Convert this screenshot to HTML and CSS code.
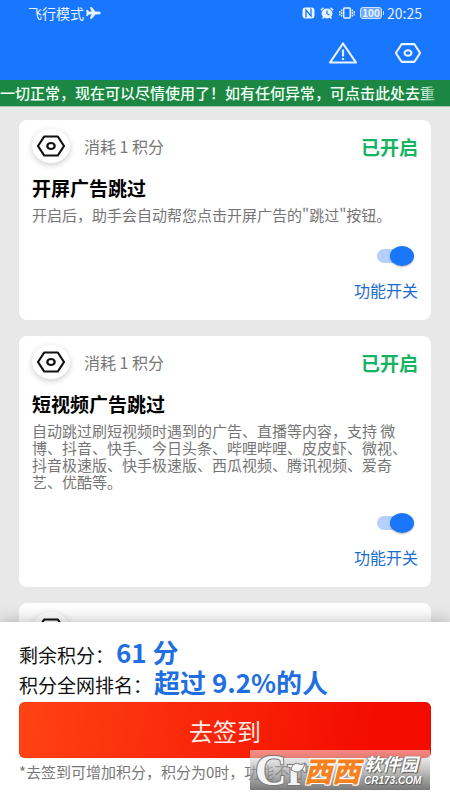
FILE: index.html
```html
<!DOCTYPE html>
<html lang="zh-CN">
<head>
<meta charset="utf-8">
<meta name="viewport" content="width=device-width, initial-scale=1">
<title>广告跳过助手</title>
<link rel="stylesheet" href="styles.css">
</head>
<body>
<svg width="0" height="0" class="defs" aria-hidden="true">
  <symbol id="hex" viewBox="0 0 30 22">
    <path d="M8.200 1.500h13.600L28 11l-6.200 9.500H8.200L2 11z" fill="none" stroke="currentColor" stroke-width="2.200" stroke-linejoin="round"/>
    <ellipse cx="15" cy="11" rx="3.700" ry="3" fill="none" stroke="currentColor" stroke-width="2.200"/>
  </symbol>
</svg>

<header class="header">
  <div class="status">
    <span>飞行模式</span>
    <svg class="plane" width="15" height="12" viewBox="0 0 15 12"><path d="M14.500 6c0-.7-.8-1.100-1.800-1.100H9.400L5.800.4H4.300l1.600 4.500H3L1.700 3.300H.5L1.100 6 .5 8.700h1.200L3 7.100h2.900l-1.600 4.500h1.500l3.600-4.500h3.300c1 0 1.800-.4 1.800-1.100z" fill="currentColor" stroke="currentColor" stroke-width=".7"/></svg>
    <span class="status-icons">
      <svg width="13" height="12" viewBox="0 0 13 12"><rect x=".5" y=".5" width="12" height="11" rx="3" fill="currentColor"/><path d="M4 10.500V3l5 6V1.500" fill="none" stroke="#1976ff" stroke-width="1.300"/></svg>
      <svg width="14" height="12" viewBox="0 0 14 12"><ellipse cx="7" cy="6.500" rx="5.500" ry="5" fill="currentColor"/><path d="M.8 3.200 3.500.8M13.200 3.200 10.500.8M2.500 11.500l1.500-1.500M11.500 11.500 10 10" stroke="currentColor" stroke-width="1.500"/><path d="M7 3.500v3.200l2.500 1.300" fill="none" stroke="#1976ff" stroke-width="1.200"/></svg>
      <svg width="16" height="12" viewBox="0 0 16 12"><rect x="4.700" y="1" width="6.600" height="10" rx="1" fill="none" stroke="currentColor" stroke-width="1.500"/><path d="M2.700 2.500v7M.8 4v4.500M13.300 2.500v7M15.200 4v4.500" stroke="currentColor" stroke-width="1.300" stroke-dasharray="1.800 .8"/></svg>
      <span class="battery">100</span>
    </span>
    <time>20:25</time>
  </div>
  <div class="toolbar">
    <button class="icon-button" type="button" aria-label="异常提示">
      <svg width="30" height="24" viewBox="0 0 30 24"><path d="M15 2.500 28 21.500H2z" fill="none" stroke="currentColor" stroke-width="2.200" stroke-linejoin="round"/><path d="M15 8.500v7M15 17v2" stroke="currentColor" stroke-width="2.200"/></svg>
    </button>
    <button class="icon-button" type="button" aria-label="设置">
      <svg width="28" height="22"><use href="#hex"/></svg>
    </button>
  </div>
</header>

<a class="notice" href="#restart">一切正常，现在可以尽情使用了！如有任何异常，可点击此处去重</a>

<main class="list">
  <article class="card">
    <div class="card-head">
      <span class="badge"><svg width="30" height="22"><use href="#hex"/></svg></span>
      <span class="cost">消耗 1 积分</span>
      <span class="state">已开启</span>
    </div>
    <h2>开屏广告跳过</h2>
    <p>开启后，助手会自动帮您点击开屏广告的"跳过"按钮。</p>
    <label class="toggle"><input type="checkbox" role="switch" checked><span>功能开关</span></label>
  </article>
  <article class="card">
    <div class="card-head">
      <span class="badge"><svg width="30" height="22"><use href="#hex"/></svg></span>
      <span class="cost">消耗 1 积分</span>
      <span class="state">已开启</span>
    </div>
    <h2>短视频广告跳过</h2>
    <p>自动跳过刷短视频时遇到的广告、直播等内容，支持 微博、抖音、快手、今日头条、哔哩哔哩、皮皮虾、微视、抖音极速版、快手极速版、西瓜视频、腾讯视频、爱奇艺、优酷等。</p>
    <label class="toggle"><input type="checkbox" role="switch" checked><span>功能开关</span></label>
  </article>
  <article class="card">
    <div class="card-head">
      <span class="badge"><svg width="30" height="22"><use href="#hex"/></svg></span>
    </div>
  </article>
</main>

<footer class="sheet">
  <div class="score"><span>剩余积分：</span><strong>61 分</strong></div>
  <div class="score"><span>积分全网排名：</span><strong>超过 9.2%的人</strong></div>
  <button class="sign" type="button">去签到</button>
  <p class="note">*去签到可增加积分，积分为0时，功能不可用</p>
  <div class="watermark">
    <svg class="mark" width="54" height="40" viewBox="0 0 54 40">
      <text x="5" y="35">Cr</text>
      <path d="M41 20c1-5 4-8 8-6 2 1 4 0 6-1-1 5-4 9-8 9-3 0-4-2-6-2z" fill="#f4f4f4" stroke="#777"/>
    </svg>
    <span class="brand">西西</span>
    <span class="site"><b>软件园</b><i>CR173.COM</i></span>
  </div>
</footer>
</body>
</html>
```
FILE: styles.css
```css
* {
  box-sizing: border-box;
}

body {
  display: flex;
  flex-direction: column;
  height: 100vh;
  margin: 0;
  background: #e8e8e8;
  color: #111;
  font-family: "Noto Sans CJK SC", sans-serif;
  font-size: 15px;
}

.defs {
  position: absolute;
}

button {
  border: 0;
  padding: 0;
  font: inherit;
}

svg {
  display: block;
}

.header {
  flex: none;
  padding: 3px 28px 12px;
  background: #1976ff;
  color: #e8f4ff;
}

.status {
  display: flex;
  align-items: center;
  height: 20px;
  font-size: 14px;
}

.plane {
  margin-left: 2px;
}

.status-icons {
  display: flex;
  align-items: center;
  gap: 5px;
  margin: 0 5px 0 auto;
}

.battery {
  position: relative;
  width: 22px;
  border: 1px solid #cfe2ff;
  border-radius: 3px;
  background: #6ea8ff;
  font-size: 10px;
  font-weight: 700;
  line-height: 10px;
  text-align: center;
}

.battery::after {
  content: "";
  position: absolute;
  top: 3px;
  right: -3px;
  width: 1px;
  height: 4px;
  background: #cfe2ff;
}

.toolbar {
  display: flex;
  justify-content: flex-end;
  align-items: center;
  gap: 36px;
  height: 45px;
  padding-top: 15px;
}

.icon-button {
  background: none;
  color: inherit;
}

.notice {
  position: relative;
  flex: none;
  overflow: hidden;
  border-bottom: 1px solid #a5cbb3;
  background: #1b8743;
  color: #f0fff5;
  font-weight: 500;
  line-height: 26px;
  text-decoration: none;
  white-space: nowrap;
}

.notice::after {
  content: "";
  position: absolute;
  inset: 0 0 0 auto;
  width: 32px;
  background: linear-gradient(90deg, #1b874300, #1b8743);
}

.list {
  flex: 1;
  display: flex;
  flex-direction: column;
  gap: 16px;
  min-height: 0;
  overflow: hidden;
  padding: 13px 19px;
}

.card {
  flex: none;
  padding: 9px 13px 18px;
  border-radius: 8px;
  background: #fff;
}

.card-head {
  display: flex;
  align-items: center;
  height: 34px;
}

.badge {
  display: grid;
  place-items: center;
  width: 38px;
  height: 34px;
  border-radius: 50%;
  background: #fff;
  box-shadow: 0 2px 6px #00000033;
  color: #111;
}

.cost {
  margin-left: 14px;
  color: #777;
  font-size: 16px;
}

.state {
  margin-left: auto;
  color: #16b364;
  font-size: 19px;
  font-weight: 700;
}

.card h2 {
  margin: 11px 0 4px;
  color: #000;
  font-size: 19px;
  line-height: 28px;
}

.card p {
  margin: 0;
  color: #757575;
  line-height: 17px;
}

.toggle {
  display: flex;
  flex-direction: column;
  align-items: flex-end;
  gap: 12px;
  width: fit-content;
  margin: 23px 0 0 auto;
  color: #1c6dd0;
  font-size: 16px;
  line-height: 24px;
}

.toggle input {
  appearance: none;
  position: relative;
  width: 37px;
  height: 20px;
  margin: 0 4px 0 0;
}

.toggle input::before {
  content: "";
  position: absolute;
  inset: 3px 2px 3px 0;
  border-radius: 7px;
  background: #b5d0fc;
}

.toggle input::after {
  content: "";
  position: absolute;
  top: 0;
  left: 0;
  width: 24px;
  height: 20px;
  border-radius: 50%;
  background: #1976f8;
  box-shadow: 0 1px 2px #0000004d;
}

.toggle input:checked::after {
  right: 0;
  left: auto;
}

.sheet {
  position: relative;
  flex: none;
  padding: 15px 19px 19px;
  background: #fff;
  box-shadow: 0 0 16px #00000047;
}

.score {
  display: flex;
  align-items: baseline;
  gap: 2px;
  height: 30px;
  font-size: 19px;
  line-height: 30px;
}

.score strong {
  color: #1f6fe0;
  font-size: 26px;
}

.sign {
  display: block;
  width: 100%;
  height: 56px;
  margin-top: 5px;
  border-radius: 6px;
  background: linear-gradient(100deg, #ff4314, #f40c00 85%);
  box-shadow: inset 0 0 1px #900;
  color: #ffece6;
  font-size: 24px;
}

.note {
  margin: 5px 0 0;
  color: #777;
  line-height: 18px;
}

.watermark {
  position: absolute;
  right: 20px;
  bottom: 10px;
  display: flex;
  align-items: center;
  width: 180px;
  height: 40px;
  background: linear-gradient(#ffffff80, #a8a8a899 45%, #6f6f6fee);
  color: #fff;
  text-shadow: 1px 1px 1px #555, -1px 0 1px #777;
}

.mark {
  flex: none;
  overflow: visible;
  font-family: "Liberation Serif", serif;
  font-size: 44px;
  font-weight: 700;
  text-shadow: none;
}

.mark text {
  fill: #f4f4f4;
  stroke: #777;
  stroke-width: 2px;
  paint-order: stroke;
}

.brand {
  width: 60px;
  color: #f5821f;
  font-size: 28px;
  font-style: italic;
  font-weight: 900;
  line-height: 40px;
  text-shadow: 1px 1px 0 #fff, -1px -1px 0 #fff, 1px -1px 0 #fff, -1px 1px 0 #fff;
}

.site {
  display: flex;
  flex-direction: column;
  font-style: italic;
}

.site b {
  font-size: 18px;
  line-height: 22px;
}

.site i {
  font-family: "Liberation Sans", sans-serif;
  font-size: 10px;
  font-weight: 700;
  line-height: 14px;
}
```
